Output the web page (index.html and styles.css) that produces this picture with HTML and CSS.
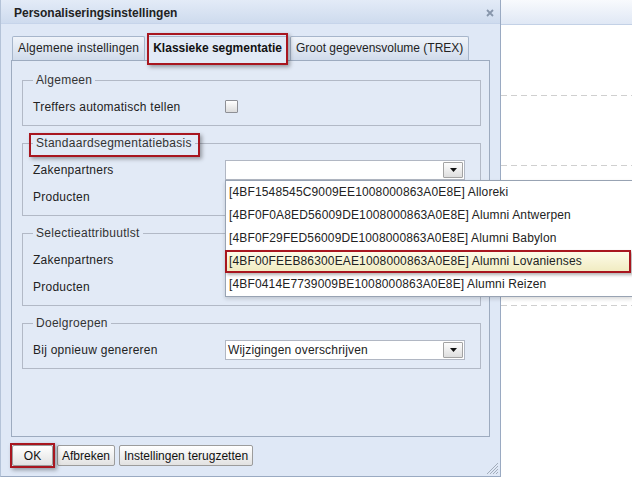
FILE: index.html
```html
<!DOCTYPE html>
<html>
<head>
<meta charset="utf-8">
<link rel="stylesheet" href="styles.css">
</head>
<body>
<div class="screen">
  <div class="window">
    <div class="titlebar">
      <span class="title">Personaliseringsinstellingen</span>
      <svg class="close" width="8" height="8" viewBox="0 0 8 8"><path d="M1 1L7 7M7 1L1 7" stroke="#8796ab" stroke-width="1.8" fill="none"/></svg>
    </div>
    <div class="wbody">
      <div class="tabs">
        <div class="tab spaced">Algemene instellingen</div>
        <div class="tab active marked">Klassieke segmentatie</div>
        <div class="tab">Groot gegevensvolume (TREX)</div>
      </div>
      <div class="panel">
        <fieldset class="fs">
          <legend>Algemeen</legend>
          <div class="row"><span class="lbl">Treffers automatisch tellen</span><span class="check"></span></div>
        </fieldset>
        <fieldset class="fs">
          <legend class="marked leg-mark">Standaardsegmentatiebasis</legend>
          <div class="row">
            <span class="lbl">Zakenpartners</span>
            <div class="combo">
              <span class="ctext"></span>
              <span class="trigger"><svg width="7" height="4" viewBox="0 0 7 4"><path d="M0 0H7L3.5 4Z" fill="#111"/></svg></span>
              <ul class="list">
                <li>[4BF1548545C9009EE1008000863A0E8E] Alloreki</li>
                <li>[4BF0F0A8ED56009DE1008000863A0E8E] Alumni Antwerpen</li>
                <li>[4BF0F29FED56009DE1008000863A0E8E] Alumni Babylon</li>
                <li class="sel">[4BF00FEEB86300EAE1008000863A0E8E] Alumni Lovanienses</li>
                <li>[4BF0414E7739009BE1008000863A0E8E] Alumni Reizen</li>
              </ul>
            </div>
          </div>
          <div class="row"><span class="lbl">Producten</span></div>
        </fieldset>
        <fieldset class="fs">
          <legend>Selectieattribuutlst</legend>
          <div class="row"><span class="lbl">Zakenpartners</span></div>
          <div class="row"><span class="lbl">Producten</span></div>
        </fieldset>
        <fieldset class="fs">
          <legend>Doelgroepen</legend>
          <div class="row">
            <span class="lbl">Bij opnieuw genereren</span>
            <div class="combo">
              <span class="ctext">Wijzigingen overschrijven</span>
              <span class="trigger"><svg width="7" height="4" viewBox="0 0 7 4"><path d="M0 0H7L3.5 4Z" fill="#111"/></svg></span>
            </div>
          </div>
        </fieldset>
      </div>
      <div class="buttons">
        <button class="btn ok marked">OK</button>
        <button class="btn">Afbreken</button>
        <button class="btn">Instellingen terugzetten</button>
      </div>
    </div>
    <svg class="grip" width="14" height="14" viewBox="0 0 14 14">
      <path d="M13 2L2 13M13 5L5 13M13 8L8 13M13 11L11 13" stroke="#a3adbb" stroke-width="1" fill="none"/>
    </svg>
  </div>
  <div class="page">
    <div class="phead"></div>
    <div class="prow r1"></div>
    <div class="prow r2"></div>
    <div class="prow r3"></div>
  </div>
</div>
</body>
</html>
```
FILE: styles.css
```css
body {
  margin: 0;
  width: 632px;
  height: 477px;
  overflow: hidden;
  font: 12px "Liberation Sans", Arial, sans-serif;
  color: #222;
  background: #fff;
}
.screen {
  display: flex;
  height: 477px;
}
.window {
  position: relative;
  z-index: 2;
  width: 501px;
  height: 477px;
  flex: none;
  box-sizing: border-box;
  border-left: 1px solid #b4c3d8;
  border-right: 1px solid #9aaac2;
  border-bottom: 1px solid #9aaac2;
  background: #dfe8f6;
  display: flex;
  flex-direction: column;
}
.titlebar {
  height: 24px;
  box-sizing: border-box;
  padding: 2px 6px 0 13px;
  display: flex;
  align-items: center;
  justify-content: space-between;
  background: linear-gradient(#e3ebf7, #cedbee);
  border-bottom: 1px solid #c6d4ea;
}
.title {
  font-weight: bold;
  color: #222;
}
.wbody {
  flex: 1;
  padding: 12px 10px 0 10px;
  display: flex;
  flex-direction: column;
}
.tabs {
  display: flex;
  gap: 2px;
  height: 24px;
  margin-left: 1px;
  align-items: flex-start;
}
.tab {
  height: 24px;
  box-sizing: border-box;
  padding: 0 5px;
  border: 1px solid #a7b6cb;
  border-bottom: none;
  border-radius: 2px 2px 0 0;
  background: linear-gradient(#f0f4fa, #d0dbeb);
  line-height: 23px;
  white-space: nowrap;
  color: #222;
}
.tab.spaced {
  letter-spacing: 0.18px;
}
.tab.active {
  height: 25px;
  font-weight: bold;
  background: #e2eaf6;
  position: relative;
  z-index: 1;
  color: #111;
}
.panel {
  height: 377px;
  box-sizing: border-box;
  border: 1px solid #9dabbf;
  background: #e2eaf6;
  padding: 12px 8px 0 10px;
}
.fs {
  margin: 0 0 10px 0;
  padding: 6px 10px 5px 10px;
  border: 1px solid #b2b9c6;
  min-width: 0;
}
.fs legend {
  padding: 0 3px;
  line-height: 14px;
  color: #333;
  letter-spacing: 0.28px;
}
.row {
  display: flex;
  align-items: center;
  height: 27px;
}
.lbl {
  width: 192px;
  flex: none;
  color: #222;
  letter-spacing: 0.25px;
}
.check {
  width: 13px;
  height: 13px;
  box-sizing: border-box;
  border: 1px solid #8e9096;
  border-radius: 1px;
  background: linear-gradient(#ffffff, #dcdcdc);
}
.combo {
  position: relative;
  width: 240px;
  height: 20px;
  box-sizing: border-box;
  border: 1px solid #b1b7c3;
  background: #fff;
  display: flex;
  align-items: center;
  justify-content: space-between;
  padding-left: 2px;
}
.ctext {
  white-space: nowrap;
  letter-spacing: 0.18px;
}
.trigger {
  width: 20px;
  height: 16px;
  box-sizing: border-box;
  margin-right: 1px;
  border: 1px solid #a3a3a3;
  border-radius: 1px;
  background: linear-gradient(#fdfdfd, #dedede);
  display: flex;
  align-items: center;
  justify-content: center;
}
.list {
  position: absolute;
  top: calc(100% + 1px);
  left: -1px;
  width: 408px;
  box-sizing: border-box;
  margin: 0;
  padding: 0;
  list-style: none;
  border: 1px solid #98a3b3;
  background: #fff;
  box-shadow: 0 2px 4px rgba(0, 0, 0, 0.15);
  z-index: 5;
}
.list li {
  height: 23px;
  box-sizing: border-box;
  line-height: 23px;
  padding-left: 3px;
  white-space: nowrap;
  color: #222;
  letter-spacing: 0.15px;
}
.list li.sel {
  border: 2px solid #a8161f;
  line-height: 19px;
  padding-left: 2px;
  margin: 0 1px 0 -1px;
  background: linear-gradient(#fdfbe8, #f1ecc2);
  box-shadow: 2px 2px 3px rgba(0, 0, 0, 0.3);
  position: relative;
}
.buttons {
  display: flex;
  gap: 4px;
  margin: 8px 0 0 1px;
}
.btn {
  height: 21px;
  box-sizing: border-box;
  padding: 0 4px;
  font: 12px "Liberation Sans", Arial, sans-serif;
  color: #111;
  border: 1px solid #9c9c9c;
  border-radius: 2px;
  background: linear-gradient(#ffffff, #e2e2e2);
}
.btn.ok {
  min-width: 41px;
}
.marked {
  position: relative;
}
.marked::after {
  content: "";
  position: absolute;
  border: 2px solid #a8161f;
  box-shadow: 2px 2px 4px rgba(0, 0, 0, 0.35);
  pointer-events: none;
}
.tab.marked::after {
  left: -1px;
  right: -1px;
  top: -4px;
  bottom: -4px;
}
.leg-mark::after {
  left: -4px;
  right: -5px;
  top: -3px;
  bottom: -7px;
}
.btn.marked::after {
  left: -3px;
  right: -3px;
  top: -3px;
  bottom: -3px;
}
.grip {
  position: absolute;
  right: 1px;
  bottom: 1px;
}
.page {
  flex: 1;
  display: flex;
  flex-direction: column;
}
.phead {
  height: 25px;
  box-sizing: border-box;
  border-bottom: 1px solid #c3d1e6;
  background: linear-gradient(#f8fafd, #e0e8f5);
}
.prow {
  background: repeating-linear-gradient(90deg, #cfcfcf 0 6px, transparent 6px 10px) left bottom / 100% 1px no-repeat;
}
.r1 { height: 71px; }
.r2 { height: 70px; }
.r3 { height: 140px; }
```
